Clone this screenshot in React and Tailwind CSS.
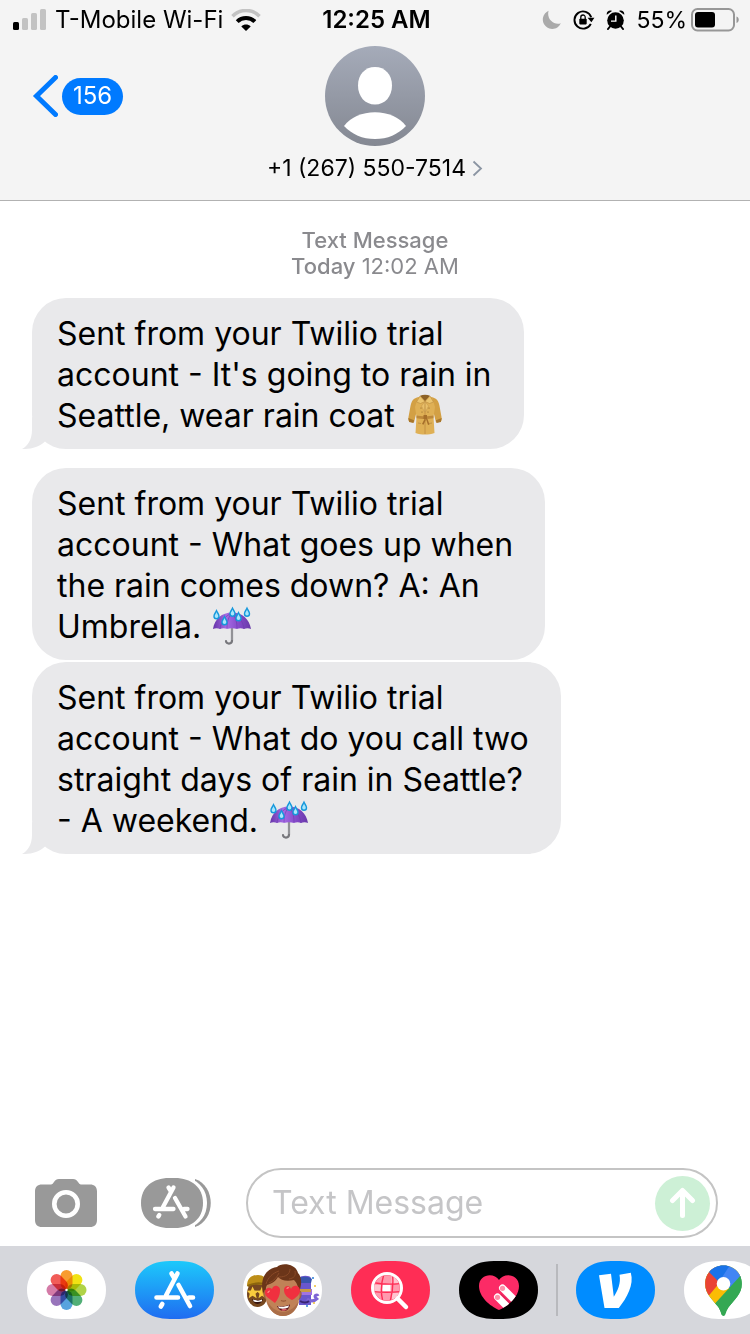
import React from "react";

const CAPSULE =
  "M0 29C0 11 14 0 35 0h9C65 0 79 11 79 29S65 58 44 58h-9C14 58 0 47 0 29z";

function SignalIcon() {
  return (
    <svg width="34" height="22" viewBox="0 0 34 22" role="img" aria-label="Signal strength">
      <rect x="0" y="13" width="6" height="8" rx="1.5" fill="#000" />
      <rect x="9" y="9" width="6" height="12" rx="1.5" fill="#c3c3c3" />
      <rect x="18" y="4" width="6" height="17" rx="1.5" fill="#c3c3c3" />
      <rect x="27" y="0" width="6" height="21" rx="1.5" fill="#c3c3c3" />
    </svg>
  );
}

function WifiIcon() {
  return (
    <svg width="30" height="22" viewBox="0 0 30 22" fill="none" role="img" aria-label="Wi-Fi">
      <path d="M1.500 7.200C9 -.4 21 -.4 28.500 7.200" stroke="#c3c3c3" strokeWidth="3.600" />
      <path d="M6.200 12.600C11 7.800 19 7.800 23.800 12.600" stroke="#000" strokeWidth="4" />
      <path d="M10.300 17.400C13 14.900 17 14.900 19.700 17.400L15 22z" fill="#000" />
    </svg>
  );
}

function MoonIcon() {
  return (
    <svg width="20" height="20" viewBox="0 0 20 20" role="img" aria-label="Do not disturb">
      <path d="M6.600 .8A9.400 9.400 0 1 0 18.800 13.300C12 15.800 4.200 9 6.600 .8z" fill="#aaa" />
    </svg>
  );
}

function RotationLockIcon() {
  return (
    <svg width="22" height="20" viewBox="0 0 22 20" fill="none" role="img" aria-label="Rotation lock">
      <path d="M17.800 13.800A8.600 8.600 0 1 1 18.200 7.200" stroke="#000" strokeWidth="1.900" />
      <path d="M14.600 7.800h6.800l-3 4.500z" fill="#000" />
      <rect x="6.300" y="8.800" width="7.400" height="5.600" rx=".8" fill="#000" />
      <path d="M7.800 9V7.200a2.200 2.200 0 0 1 4.400 0V9" stroke="#000" strokeWidth="1.300" />
    </svg>
  );
}

function AlarmIcon() {
  return (
    <svg width="19" height="20" viewBox="0 0 19 20" fill="none" role="img" aria-label="Alarm">
      <circle cx="9.500" cy="10.500" r="8.300" fill="#000" />
      <path d="M.8 4.800C.2 1.600 3.200-.4 6 .9zM18.200 4.800C18.800 1.600 15.800-.4 13 .9z" fill="#000" />
      <path d="M4 16.500L2 19M15 16.500l2 2.500" stroke="#000" strokeWidth="2" strokeLinecap="round" />
      <path d="M9.800 5.500v5.600H5" stroke="#fff" strokeWidth="1.400" />
    </svg>
  );
}

function BatteryIcon() {
  return (
    <svg width="49" height="24" viewBox="0 0 49 24" role="img" aria-label="Battery">
      <rect x="1" y="1" width="42" height="21.500" rx="5.500" fill="none" stroke="#979797" strokeWidth="2" />
      <rect x="4" y="4" width="20" height="15.500" rx="3" fill="#000" />
      <path d="M45.500 8.500c3 .8 3 5.700 0 6.500z" fill="#979797" />
    </svg>
  );
}

function Avatar() {
  return (
    <svg width="100" height="100" viewBox="0 0 100 100" aria-hidden="true">
      <defs>
        <linearGradient id="avatar" x1="0" y1="0" x2="0" y2="1">
          <stop offset="0" stopColor="#a5abb9" />
          <stop offset="1" stopColor="#848892" />
        </linearGradient>
      </defs>
      <circle cx="50" cy="50" r="50" fill="url(#avatar)" />
      <path d="M50 21c10 0 17 7.500 17 18.500S60 58.500 50 58.500 33 50.500 33 39.500 40 21 50 21z" fill="#fff" />
      <path d="M19 80C26 71 37 66.300 50 66.300S74 71 81 80C73 88.500 62.500 93 50 93S27 88.500 19 80z" fill="#fff" />
    </svg>
  );
}

function CoatEmoji() {
  return (
    <svg className="-my-2 ml-[2px] inline-block align-baseline" width="38" height="41" viewBox="0 0 38 41" role="img" aria-label="coat">
      <path d="M13 3C7 4 5.500 7 4.500 12L2.500 23c-.6 3 .2 4.500 2 5l3.500.5L11 16zM25 3c6 1 7.500 4 8.500 9l2 11c.6 3-.2 4.500-2 5l-3.500.5L27 16z" fill="#d3a044" />
      <path d="M2.300 24l5.800 2.200-.7 2.700-4.300-1zM35.700 24l-5.800 2.200.7 2.700 4.300-1z" fill="#a9772b" />
      <path d="M12 3h14l3 10-1.500 10L28.500 39c-6 2-13 2-19 0l1-16L9 13z" fill="#dfb055" />
      <path d="M14 1.800C17 .5 21 .5 24 1.800l-5 5.700z" fill="#8d6226" />
      <path d="M14 2L10.500 8l4 1.500L19 7.500zM24 2l3.500 6-4 1.500L19 7.500z" fill="#ebc46e" stroke="#b98a40" strokeWidth=".6" />
      <path d="M19 7.500L15.500 12l3 6zM19 7.500l3.500 4.500-3 6z" fill="#e9c06a" stroke="#c0924a" strokeWidth=".5" />
      <path d="M19 18v22" stroke="#bd8c40" strokeWidth=".8" />
      <path d="M10.500 21.500c5 1 12 1 17 0v2.700c-5 1-12 1-17 0z" fill="#bd883a" />
      <path d="M17.500 21h3.500v4h-3.500zM18.500 25l-2.500 5 1.500.8 2.500-5.300zM20 25l2 6 1.500-.5-2-5.500z" fill="#a66f2a" />
      <path d="M12 29l3 .5M26 29l-3 .5" stroke="#b88a40" strokeWidth=".8" />
      <g fill="#8a6228">
        <circle cx="15" cy="14" r=".6" /><circle cx="23" cy="14" r=".6" />
        <circle cx="16" cy="18" r=".6" /><circle cx="22" cy="18" r=".6" />
      </g>
    </svg>
  );
}

function UmbrellaEmoji() {
  const drops = [[4.5, 3], [12.5, 9], [20.5, 0.5], [26.5, 5], [35, 0.5]];
  return (
    <svg className="-my-2 ml-[2px] inline-block align-baseline" width="40" height="40" viewBox="0 0 40 40" role="img" aria-label="umbrella with rain drops">
      <defs>
        <linearGradient id="canopy" x1="0" y1="0" x2="1" y2="0">
          <stop offset="0" stopColor="#6533a8" />
          <stop offset=".35" stopColor="#a56be4" />
          <stop offset=".7" stopColor="#8348c8" />
          <stop offset="1" stopColor="#6839a8" />
        </linearGradient>
      </defs>
      <path d="M20 20v14.500c0 4-6 4-6 .5" fill="none" stroke="#77777c" strokeWidth="2.200" strokeLinecap="round" />
      <path d="M20 20v14" fill="none" stroke="#c6c6ca" strokeWidth=".7" />
      <path d="M1 23C2.500 13 10 6.500 20 6.500S37.500 13 39 23c-2-1-5-1-7 0-2-1-5-1-7 0-3-1-7-1-10 0-2-1-5-1-7 0-2-1-5-1-7 0z" fill="url(#canopy)" />
      <path d="M8 23c1-8 5-13 12-16M15 22c0-7 2-12 5-15M25 22c0-7-2-12-5-15M32 23c-1-8-5-13-12-16" fill="none" stroke="#6a3bab" strokeWidth=".6" />
      {drops.map(([x, y]) => (
        <g key={x} transform={`translate(${x} ${y})`}>
          <path d="M0 0c1 3 3.200 4.800 3.200 7.200a3.200 3.200 0 0 1-6.400 0C-3.200 4.800-1 3 0 0z" fill="#1598dc" />
          <path d="M0 3c.5 1.600 1.800 2.800 1.800 4.300a1.800 1.800 0 0 1-3.600 0C-1.800 5.800-.5 4.600 0 3z" fill="#a9e6fb" />
        </g>
      ))}
    </svg>
  );
}

function Bubble({ lines, emoji, tail }) {
  return (
    <li className="relative w-fit rounded-[34px] bg-[#e9e9eb] pt-[15px] pr-8 pb-[13px] pl-[25px] text-[32px] leading-[41px] text-black">
      {tail && (
        <svg className="absolute bottom-0 -left-[10px]" width="30" height="32" viewBox="0 0 30 32" aria-hidden="true">
          <path d="M10 0V13C10 22 6 29 0 32C9 32.300 17 30 23 24.500L30 10z" fill="#e9e9eb" />
        </svg>
      )}
      <p>
        {lines.map((line, i) => (
          <span key={line} className="block">
            {line}
            {i === lines.length - 1 && <> {emoji}</>}
          </span>
        ))}
      </p>
    </li>
  );
}

function StoreGlyph() {
  return (
    <g fill="none" stroke="#fff" strokeWidth="4.600" strokeLinecap="round">
      <path d="M42.500 12.500L31 34.500M36.500 12.500l3 5M43.500 24L55 45M21.500 36.500H43M54 36.500h4M27.300 43l-1.500 2.500" />
    </g>
  );
}

function PhotosGlyph() {
  const petals = ["#f7941d", "#f0e000", "#a9cf38", "#43a86b", "#4a9bdb", "#8f69b5", "#d0709f", "#f04e4a"];
  return (
    <g className="isolate">
      {petals.map((c, i) => (
        <rect key={c} className="mix-blend-multiply" x="33.500" y="9" width="12" height="19.500" rx="6" fill={c} fillOpacity=".92" transform={`rotate(${i * 45} 39.500 29)`} />
      ))}
      <circle cx="39.500" cy="29" r="1.200" fill="#fff" />
    </g>
  );
}

function MemojiGlyph() {
  return (
    <g>
      <path d="M56 17c2-3 11-3 12 0v27H56z" fill="#6957cd" />
      <path d="M55 18c3-3 10-3 14 0l-1 4H56z" fill="#3854ad" />
      <path d="M55 28h14v6H55z" fill="#a174e0" />
      <path d="M57 28h11v3H57z" fill="#c99a43" />
      <path d="M64 38c4 3 8 2 11-1M74 37a1.500 1.500 0 1 1 1-2" fill="none" stroke="#7c65d5" strokeWidth="3" />
      <path d="M57 40c3 2 7 2 9 0" fill="none" stroke="#392573" strokeWidth="2" />
      <g>
        <circle cx="70" cy="17" r="1" fill="#297bd5" /><circle cx="72" cy="25" r="1" fill="#efbd36" />
        <circle cx="71" cy="42" r="1" fill="#efbd36" /><circle cx="64" cy="45" r="1" fill="#297bd5" />
      </g>
      <ellipse cx="14.500" cy="33" rx="10.500" ry="13" fill="#76471f" />
      <path d="M4 25c0-8 5-11 11-11 5 0 9 3 9 8v4C17 22 9 23 4 25z" fill="#bd8e18" />
      <path d="M4.500 25c6-3 12-4 20-1" fill="none" stroke="#8c650d" strokeWidth="2" />
      <path d="M9.500 25.500l2 4 4.500.3-3.500 3 1.200 4.400-4.200-2.400-3.800 2.400 1-4.400-2.800-3 4-.3zM19 25.500l1.800 4 4.200.3-3.200 3 1 4.400-3.800-2.400-3.500 2.400 1-4.400-3-3 3.800-.3z" fill="#f9cb3d" />
      <path d="M9 38c4 1.500 7 1.500 11 0-1 6-9 7-11 0z" fill="#351410" />
      <path d="M10 38.500c4 1.500 6 1.500 9 0v1.800c-3 1-6 1-8.500 0z" fill="#fff" />
      <path d="M23 30c-3-1-3 7 1 9M56 30c3-1 3 7-1 9" fill="#b57348" stroke="#965b37" strokeWidth="1" />
      <path d="M23 22c0-10 33-10 33 0v15c0 10-8 18-16 18s-17-8-17-18z" fill="#c08257" />
      <path d="M24 40c2 9 8 15 16 15s14-6 16-15c-3 5-9 11-16 11s-13-6-16-11z" fill="#ab6e48" />
      <path d="M20 33C16 14 26 7 34 6c5-5 19-3 21 6 4 4 4 12 1 19-1-6-2-9-5-12-8 2-13 0-16-3-3 5-7 7-11 8z" fill="#6b3519" />
      <path d="M23 23c2-7 7-11 13-13M26 22c5-2 8-6 10-10M36 16c7 0 11-3 11-8M46 18c5-1 7-3 6-8" fill="none" stroke="#8a4a27" strokeWidth="1" />
      <path d="M32 42l-8-6c-5-5 0-12 5-8 2-6 9-3 8 2 0 4-2 8-5 12zM49 39c-4-2-8-5-8-10 0-5 6-5 7-1 2-5 9-4 9 2 0 3-4 7-8 9z" fill="#f0303f" />
      <path d="M25 32c0-2 1-2 2-2M44 28c0-1 1-2 2-1" stroke="#ff8a83" strokeWidth="1.200" fill="none" />
      <path d="M38 39.500c2 1 3 1 5 0" fill="none" stroke="#995735" strokeWidth="1.200" />
      <path d="M34 45c5 1 8 .5 13-1.500-1 8-10 9-13 1.500z" fill="#5a1418" />
      <path d="M35 45.300c4 1 7 .5 11-1l-.7 2.200c-3 1.300-6 1.500-9.300.8z" fill="#fff" />
      <path d="M38 49c2-1.500 4-1.500 6-.8-2 1.800-4 2.200-6 .8z" fill="#df656b" />
    </g>
  );
}

function ImageSearchGlyph() {
  return (
    <g>
      <clipPath id="lens"><circle cx="36" cy="27" r="12.800" /></clipPath>
      <g clipPath="url(#lens)">
        <rect x="22" y="13" width="28" height="28" fill="#ff9aae" />
        <path d="M31.500 23.500h8v7h-8z" fill="#fff" />
        <path d="M40.500 14h7v8h-7zM23 24h7v7h-7zM41 32h7v6h-7z" fill="#ffc4cf" />
        <path d="M33 13c-3 9-3.500 19-1 28M41.500 13c1 9 0 19-2.500 28M22 21.500c9 2 18 2 28 1M22 30.500c9 1 18 1 28 0" stroke="#ff2d55" strokeWidth="1.400" fill="none" />
      </g>
      <circle cx="36" cy="27" r="14.500" fill="none" stroke="#fff" strokeWidth="3" />
      <path d="M46.500 37.500l8.500 8.500" stroke="#fff" strokeWidth="4.500" strokeLinecap="round" />
    </g>
  );
}

function HeartTouchGlyph() {
  return (
    <g>
      <clipPath id="heart"><path d="M40 49C31 45 20 36 20 25c0-12 15-14 20-6 5-8 20-6 20 6 0 11-11 20-20 24z" /></clipPath>
      <g clipPath="url(#heart)">
        <path d="M18 10h44v42H18z" fill="#fc2b66" />
        <path d="M43.500 27l18 18M38.500 36l18 18" stroke="#fff" strokeWidth="7" strokeLinecap="round" />
        <path d="M42 33l14 14" stroke="#df245b" strokeWidth="1.200" />
        <circle cx="43.500" cy="27.300" r="2.600" fill="#ff91aa" />
        <circle cx="38.500" cy="36.300" r="2.600" fill="#ff91aa" />
      </g>
    </g>
  );
}

function VenmoGlyph() {
  return (
    <path d="M23 14.200l12-1.500 2.800 23c3.800-6 7.400-13.500 5.700-22l11.300-2c3.500 12-4 25-12 35.300H28.500z" fill="#fff" />
  );
}

function MapsGlyph() {
  return (
    <g>
      <clipPath id="pin"><path d="M39.500 55c-2.500 0-2-5-6-10-5-6.500-12.300-12-12.300-22.300C21.200 12.500 29 4.500 39.500 4.500s18.300 8 18.300 18.200C57.800 33 50.500 38.500 45.500 45c-4 5-3.500 10-6 10z" /></clipPath>
      <g clipPath="url(#pin)">
        <path d="M20 3h39v53H20z" fill="#34a853" />
        <path d="M20 3h39v10.500L28 47l-11-7z" fill="#fbbc04" />
        <path d="M17 6h20v14L24.500 35 17 31z" fill="#ea4335" />
        <path d="M25 10L33 1h27v12L46 28l-6-5-7.500-6z" fill="#4285f4" />
        <path d="M24 10L31 1h17l-13 20z" fill="#1a73e8" />
        <path d="M59 12v20L34 58l-8-10z" fill="#34a853" />
      </g>
      <circle cx="39.500" cy="22.700" r="6.800" fill="#fff" />
    </g>
  );
}

function DockApp({ label, fill, children }) {
  return (
    <button type="button" aria-label={label} className="shrink-0">
      <svg width="79" height="58" viewBox="0 0 79 58" aria-hidden="true">
        <defs>
          <linearGradient id="store" x1="0" y1="0" x2="0" y2="1">
            <stop offset="0" stopColor="#1dc9fb" />
            <stop offset="1" stopColor="#1f6cf1" />
          </linearGradient>
        </defs>
        <path d={CAPSULE} fill={fill} />
        {children}
      </svg>
    </button>
  );
}

export default function App() {
  return (
    <div className="flex min-h-screen flex-col overflow-x-hidden bg-white font-['Inter',sans-serif] text-black">
      <header className="border-b border-[#b2b2b2] bg-[#f4f4f4] pb-[18px]">
        <div className="grid h-10 grid-cols-[1fr_auto_1fr] items-center pr-[10px] pl-[13px] text-[23px] leading-7">
          <div className="flex items-center gap-2">
            <SignalIcon />
            <span className="text-2xl whitespace-nowrap">T-Mobile Wi-Fi</span>
            <WifiIcon />
          </div>
          <time className="text-2xl font-semibold">12:25 AM</time>
          <div className="flex items-center justify-end gap-[11px]">
            <MoonIcon />
            <RotationLockIcon />
            <AlarmIcon />
            <div className="flex items-center gap-1">
              <span>55%</span>
              <BatteryIcon />
            </div>
          </div>
        </div>
        <div className="grid grid-cols-[1fr_auto_1fr] pt-[6px]">
          <button type="button" aria-label="Back, 156 unread" className="flex h-[100px] items-center gap-1 justify-self-start pl-8">
            <svg width="26" height="42" viewBox="0 0 26 42" fill="none" aria-hidden="true">
              <path d="M23.500 2.500L4.500 21l19 18.500" stroke="#007aff" strokeWidth="5" strokeLinecap="round" strokeLinejoin="miter" />
            </svg>
            <span className="flex h-[37px] items-center rounded-full bg-[#007aff] px-[11px] text-2xl text-white">156</span>
          </button>
          <button type="button" className="flex flex-col items-center gap-2">
            <Avatar />
            <span className="flex items-center gap-[6px] text-[23px] leading-7">
              +1 (267) 550-7514
              <svg width="11" height="17" viewBox="0 0 11 17" fill="none" aria-hidden="true">
                <path d="M1.500 1.500l7.500 7-7.500 7" stroke="#8b95a3" strokeWidth="1.800" />
              </svg>
            </span>
          </button>
        </div>
      </header>

      <main className="flex-1 px-8 pt-[26px]">
        <p className="text-center text-[22px] leading-[26px] text-[#8a8a8e]">
          <span className="block font-medium">Text Message</span>
          <span className="font-medium">Today</span> 12:02 AM
        </p>
        <ul className="flex flex-col gap-[2px] pt-[19px]">
          <Bubble
            tail
            lines={["Sent from your Twilio trial", "account - It's going to rain in", "Seattle, wear rain coat"]}
            emoji={<CoatEmoji />}
          />
          <li aria-hidden="true" className="h-[15px]" />
          <Bubble
            lines={["Sent from your Twilio trial", "account - What goes up when", "the rain comes down? A: An", "Umbrella."]}
            emoji={<UmbrellaEmoji />}
          />
          <Bubble
            tail
            lines={["Sent from your Twilio trial", "account - What do you call two", "straight days of rain in Seattle?", "- A weekend."]}
            emoji={<UmbrellaEmoji />}
          />
        </ul>
      </main>

      <footer>
        <form className="flex items-center pr-8 pb-2 pl-[35px]" onSubmit={(e) => e.preventDefault()}>
          <button type="button" aria-label="Camera" className="mr-11 shrink-0">
            <svg width="62" height="48" viewBox="0 0 62 48" aria-hidden="true">
              <path d="M7 5.500h9c1.500 0 2-1 2.800-2.200C20.500 1 21.500 0 24 0h14c2.500 0 3.500 1 5.200 3.300C44 4.500 44.500 5.500 46 5.500h9c4.500 0 7 2.500 7 7V41c0 4.500-2.500 7-7 7H7c-4.500 0-7-2.500-7-7V12.500c0-4.500 2.500-7 7-7z" fill="#999" />
              <circle cx="31" cy="25" r="11.700" fill="none" stroke="#fff" strokeWidth="4.600" />
            </svg>
          </button>
          <button type="button" aria-label="Apps" className="mr-[35px] shrink-0">
            <svg width="70" height="50" viewBox="0 0 70 50" aria-hidden="true">
              <path d="M54 1c21 7 21 41 0 48z" fill="#999" />
              <path d="M0 25C0 9 12-2 30-2h5c19 0 31 11 31 27S54 52 35 52h-5C12 52 0 41 0 25z" fill="#fff" />
              <path d="M0 25C0 9 12 0 28 0h6c16 0 28 9 28 25S50 50 34 50h-6C12 50 0 41 0 25z" fill="#999" />
              <path d="M32.500 9.500L22 29M27.500 9.500l2.500 4M34 20l10.500 18.500M14 31h18.500M43 31h3.500M18.300 37l-1 1.500" fill="none" stroke="#fff" strokeWidth="4.300" strokeLinecap="round" />
            </svg>
          </button>
          <div className="flex h-[70px] min-w-0 flex-1 items-center rounded-full border-2 border-[#c4c4c4] pr-[6px] pl-6">
            <input
              type="text"
              aria-label="Text Message"
              placeholder="Text Message"
              className="min-w-0 flex-1 bg-transparent text-[32px] leading-10 outline-none placeholder:text-[#c5c5c7]"
            />
            <button type="submit" aria-label="Send" className="flex size-[55px] shrink-0 items-center justify-center rounded-full bg-[#cdf0d6]">
              <svg width="27" height="32" viewBox="0 0 27 32" fill="none" aria-hidden="true">
                <path d="M13.500 28.500V4M3.500 13.500l10-10 10 10" stroke="#fff" strokeWidth="5" strokeLinecap="round" strokeLinejoin="round" />
              </svg>
            </button>
          </div>
        </form>
        <nav aria-label="Message apps" className="flex h-[88px] items-center gap-[29px] overflow-hidden bg-[#d6d7dc] pl-[27px]">
          <DockApp label="Photos" fill="#fff"><PhotosGlyph /></DockApp>
          <DockApp label="App Store" fill="url(#store)"><StoreGlyph /></DockApp>
          <DockApp label="Memoji stickers" fill="#fff"><MemojiGlyph /></DockApp>
          <DockApp label="Image search" fill="#ff2d55"><ImageSearchGlyph /></DockApp>
          <div className="flex shrink-0 items-center gap-[18px]">
            <DockApp label="Digital Touch" fill="#000"><HeartTouchGlyph /></DockApp>
            <div className="h-[52px] w-[2px] bg-[#b8b9bd]" />
            <DockApp label="Venmo" fill="#008cff"><VenmoGlyph /></DockApp>
          </div>
          <DockApp label="Google Maps" fill="#fff"><MapsGlyph /></DockApp>
        </nav>
      </footer>
    </div>
  );
}
